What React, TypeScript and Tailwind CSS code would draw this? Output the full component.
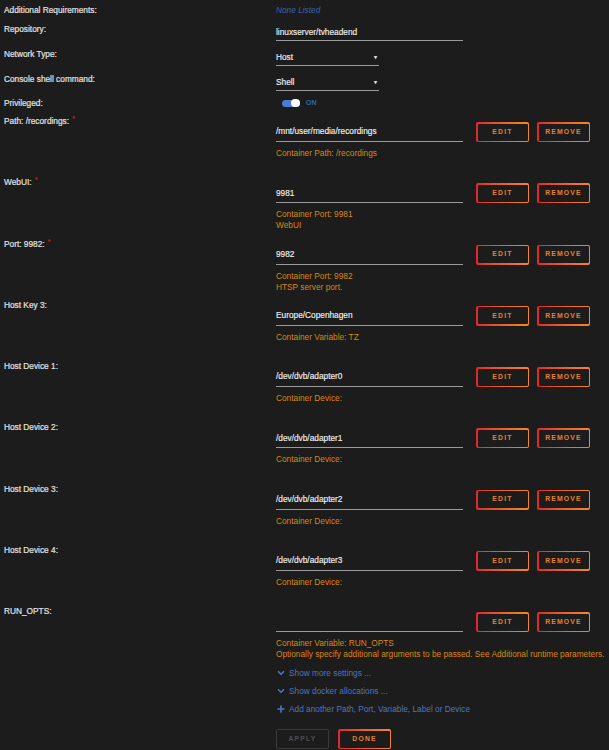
import { ChevronDown, Plus } from 'lucide-react';

type ConfigRow = {
  label: string;
  required?: boolean;
  value: string;
  notes: string[];
};

const rows: ConfigRow[] = [
  { label: 'Path: /recordings:', required: true, value: '/mnt/user/media/recordings', notes: ['Container Path: /recordings'] },
  { label: 'WebUI:', required: true, value: '9981', notes: ['Container Port: 9981', 'WebUI'] },
  { label: 'Port: 9982:', required: true, value: '9982', notes: ['Container Port: 9982', 'HTSP server port.'] },
  { label: 'Host Key 3:', value: 'Europe/Copenhagen', notes: ['Container Variable: TZ'] },
  { label: 'Host Device 1:', value: '/dev/dvb/adapter0', notes: ['Container Device:'] },
  { label: 'Host Device 2:', value: '/dev/dvb/adapter1', notes: ['Container Device:'] },
  { label: 'Host Device 3:', value: '/dev/dvb/adapter2', notes: ['Container Device:'] },
  { label: 'Host Device 4:', value: '/dev/dvb/adapter3', notes: ['Container Device:'] },
];

const GradientButton: React.FC<{ text: string }> = ({ text }) => (
  <div className="h-[20px] w-[53px] rounded-[2px] bg-gradient-to-r from-[#e0262a] to-[#f5862c] p-[1.5px]">
    <div className="flex h-full w-full items-center justify-center rounded-[1px] bg-[#1c1c1c] text-[6.8px] font-bold tracking-[1.2px] text-[#e8812c]">
      {text}
    </div>
  </div>
);

const Label: React.FC<{ text: string; required?: boolean }> = ({ text, required }) => (
  <div className="w-[272px] shrink-0 leading-[12px] text-[#e2e2e2] [-webkit-text-stroke:0.2px_#e2e2e2]">
    {text}
    {required && (
      <span className="relative -top-[3px] ml-[3px] text-[8px] font-bold text-[#d0161d] [-webkit-text-stroke:0]">*</span>
    )}
  </div>
);

const SimpleRow: React.FC<{ label: string; children: React.ReactNode }> = ({ label, children }) => (
  <div className="flex h-[25px]">
    <div className="pt-[7px]">
      <Label text={label} />
    </div>
    <div className="pt-[8px]">{children}</div>
  </div>
);

const Select: React.FC<{ value: string }> = ({ value }) => (
  <div className="flex h-[17px] w-[103px] items-center justify-between border-b border-[#9a9a9a] pr-[1px] text-[#f0f0f0] [-webkit-text-stroke:0.15px_#f0f0f0]">
    <span>{value}</span>
    <span className="text-[5px] leading-none">▼</span>
  </div>
);

const Field: React.FC<{ row: ConfigRow; fixed?: boolean }> = ({ row, fixed = true }) => (
  <div className={fixed ? 'flex h-[61.25px]' : 'flex'}>
    <Label text={row.label} required={row.required} />
    <div className="pt-[7px]">
      <div className="flex items-start">
        <div className="flex h-[20px] w-[187px] items-center border-b border-[#9a9a9a] text-[#f0f0f0] [-webkit-text-stroke:0.15px_#f0f0f0]">
          {row.value}
        </div>
        <div className="ml-[13px] flex gap-[8px]">
          <GradientButton text="EDIT" />
          <GradientButton text="REMOVE" />
        </div>
      </div>
      <div className="mt-[6px] leading-[11px] text-[#d9870f]">
        {row.notes.map((n) => (
          <div key={n}>{n}</div>
        ))}
      </div>
    </div>
  </div>
);

export default function App() {
  return (
    <div className="min-h-[750px] w-full bg-[#1c1c1c] pl-[4px] font-['Liberation_Sans',Arial,sans-serif] text-[8.3px] text-[#e2e2e2]">
      <div className="flex pt-[4px] leading-[12px]">
        <Label text="Additional Requirements:" />
        <span className="italic text-[#3f62ae]">None Listed</span>
      </div>

      <SimpleRow label="Repository:">
        <div className="flex h-[17px] w-[187px] items-center border-b border-[#9a9a9a] text-[#f0f0f0] [-webkit-text-stroke:0.15px_#f0f0f0]">
          linuxserver/tvheadend
        </div>
      </SimpleRow>
      <SimpleRow label="Network Type:">
        <Select value="Host" />
      </SimpleRow>
      <SimpleRow label="Console shell command:">
        <Select value="Shell" />
      </SimpleRow>

      <div className="flex h-[24px] pt-[6px]">
        <Label text="Privileged:" />
        <div className="flex h-[12px] items-center pl-[6px]">
          <div className="relative h-[7px] w-[18px] rounded-full bg-[#4b7bd2]">
            <div className="absolute -top-[0.5px] right-0 h-[8px] w-[9px] rounded-full bg-white" />
          </div>
          <span className="ml-[6px] text-[7px] font-bold text-[#2a67ad]">ON</span>
        </div>
      </div>

      {rows.map((r) => (
        <Field key={r.label} row={r} />
      ))}

      <Field
        fixed={false}
        row={{
          label: 'RUN_OPTS:',
          value: '',
          notes: [
            'Container Variable: RUN_OPTS',
            'Optionally specify additional arguments to be passed. See Additional runtime parameters.',
          ],
        }}
      />

      <div className="ml-[272px] mt-[4px] text-[#4e74c2]">
        <div className="flex h-[18px] items-center gap-[3px]">
          <ChevronDown size={10} strokeWidth={4} />
          <span>Show more settings ...</span>
        </div>
        <div className="flex h-[18px] items-center gap-[3px]">
          <ChevronDown size={10} strokeWidth={4} />
          <span>Show docker allocations ...</span>
        </div>
        <div className="flex h-[18px] items-center gap-[3px]">
          <Plus size={10} strokeWidth={4} />
          <span>Add another Path, Port, Variable, Label or Device</span>
        </div>
        <div className="mt-[11px] flex gap-[9px] pb-[3px]">
          <div className="flex h-[20px] w-[53px] items-center justify-center rounded-[2px] border-[1.5px] border-[#3a3a3a] text-[6.8px] font-bold tracking-[1.2px] text-[#4f4f4f]">
            APPLY
          </div>
          <GradientButton text="DONE" />
        </div>
      </div>
    </div>
  );
}
